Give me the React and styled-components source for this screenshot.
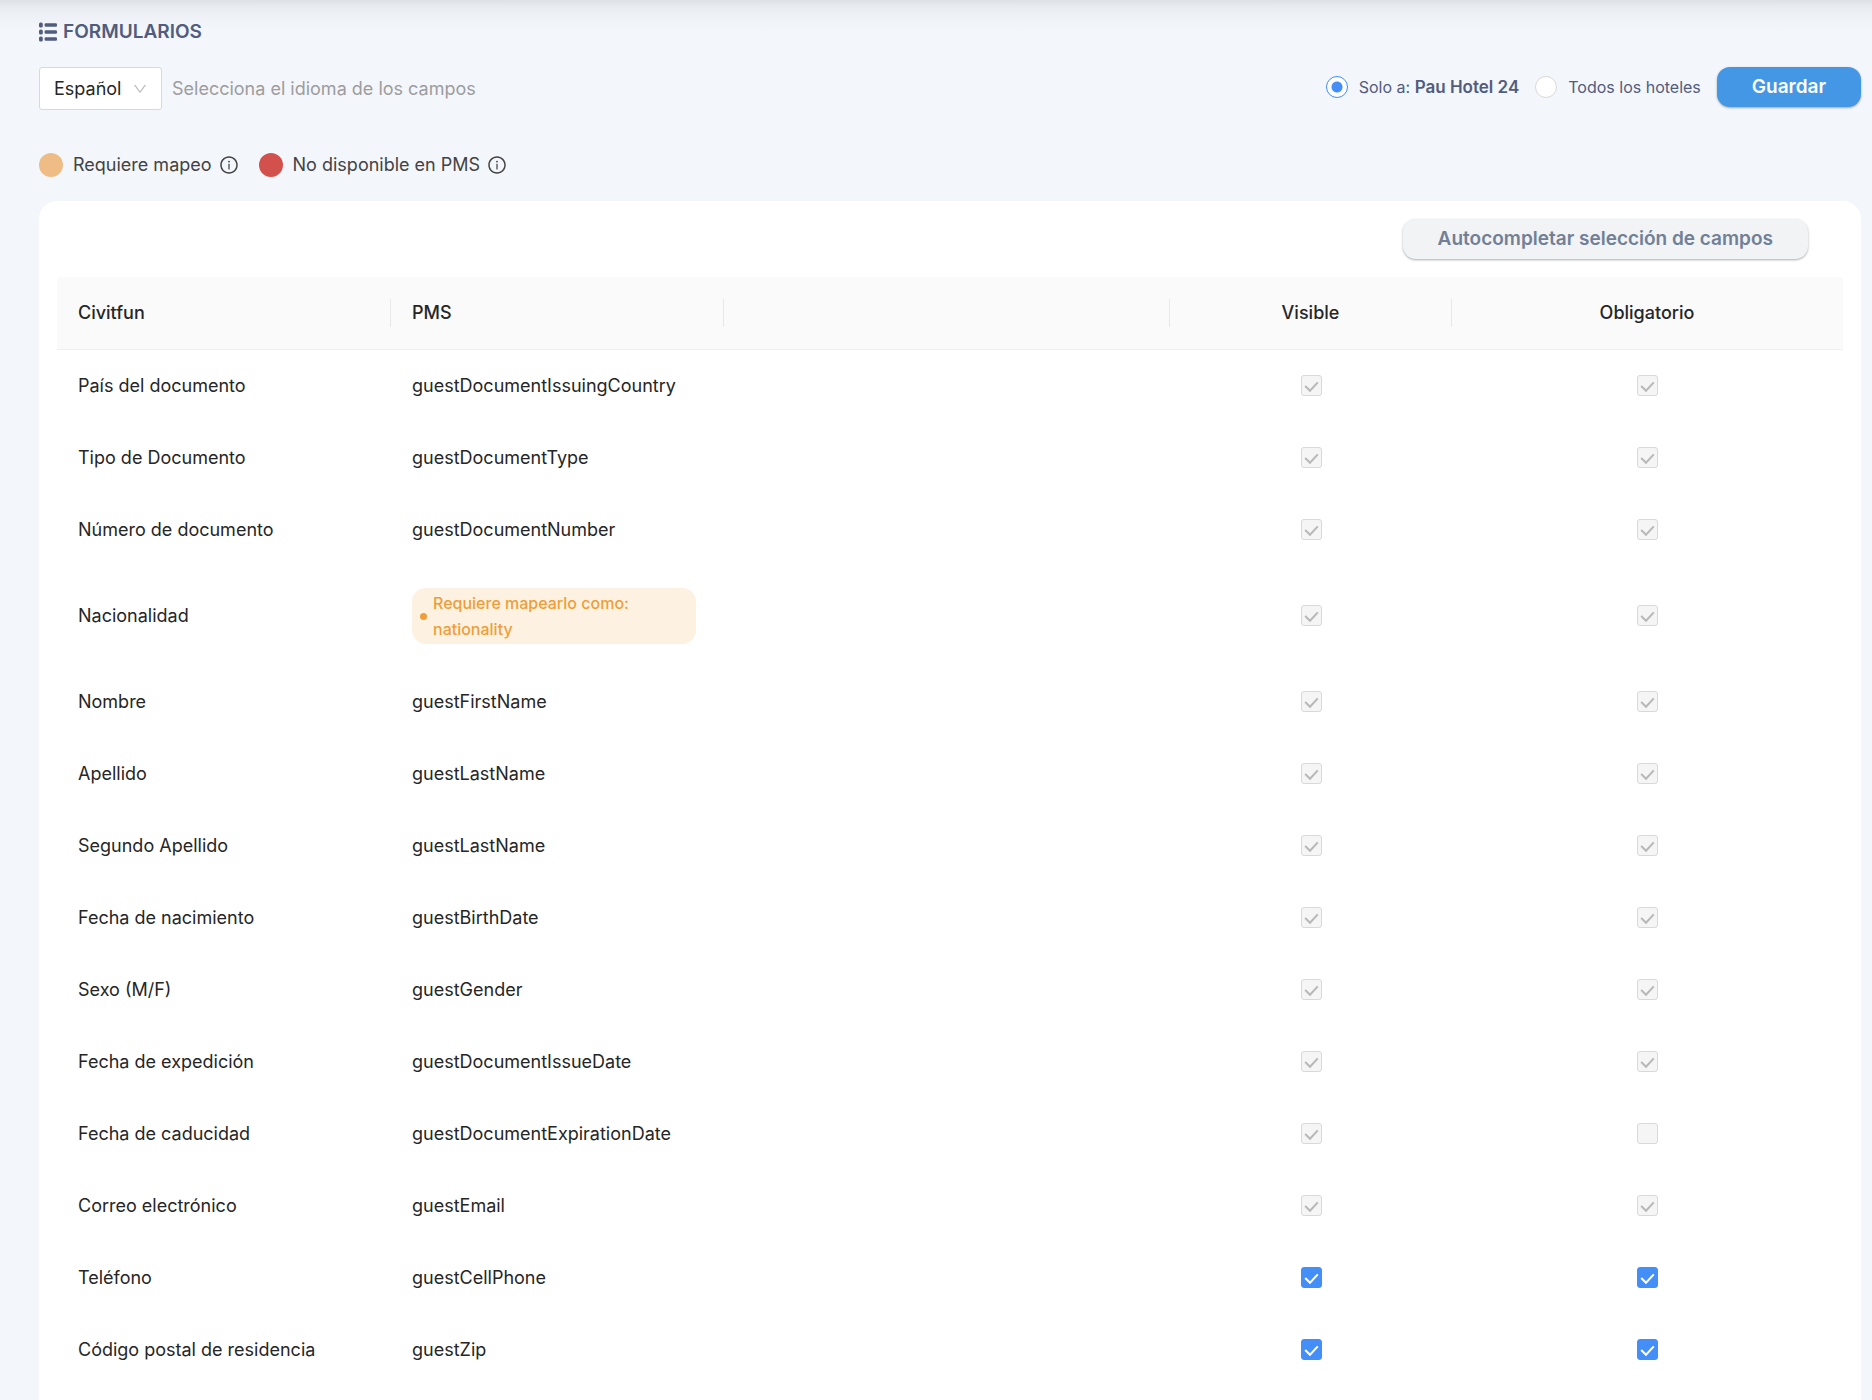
// src/App.jsx
import React, { useState } from 'react';
import styled, { createGlobalStyle } from 'styled-components';
import { AiOutlineDown, AiOutlineInfoCircle } from 'react-icons/ai';

const GlobalStyle = createGlobalStyle`
  * {
    box-sizing: border-box;
  }

  body {
    margin: 0;
    background-color: #f3f6fb;
    color: #262626;
    font-family: Inter, "Liberation Sans", sans-serif;
    font-size: 18px;
    line-height: 28px;
  }

  button, input, select {
    margin: 0;
    font: inherit;
  }
`;

const Page = styled.main`
  padding: 17px 11px 0 39px;
  background: linear-gradient(#dde1e7 0, #e7ebef 6px, #edf1f5 14px, #f3f6fb 30px);
`;

const Title = styled.h1`
  display: flex;
  align-items: center;
  gap: 6px;
  margin: 0 0 20px;
  color: #515c7e;
  font-size: 19px;
  font-weight: 600;
  line-height: 30px;
`;

const Toolbar = styled.div`
  display: flex;
  align-items: flex-start;
  justify-content: space-between;
`;

const LanguageField = styled.label`
  display: flex;
  align-items: center;
  gap: 10px;
  color: #9d9d9d;
`;

const SelectBox = styled.span`
  display: grid;
  align-items: center;

  > * {
    grid-area: 1 / 1;
  }

  svg {
    justify-self: end;
    margin-right: 14px;
    color: #bfbfbf;
    pointer-events: none;
  }
`;

const Select = styled.select`
  width: 123px;
  height: 43px;
  padding: 0 14px;
  border: 1px solid #d9d9d9;
  border-radius: 3px;
  background-color: #fff;
  color: #262626;
  appearance: none;
`;

const Actions = styled.div`
  display: flex;
  align-items: center;
  gap: 16px;
  color: #515c7e;
  font-size: 16px;
`;

const RadioLabel = styled.label`
  display: flex;
  align-items: center;
  gap: 11px;

  strong {
    font-size: 17px;
    font-weight: 600;
  }
`;

const Radio = styled.input`
  width: 22px;
  height: 22px;
  border: 1px solid #d9d9d9;
  border-radius: 50%;
  background-color: #fff;
  appearance: none;

  &:checked {
    border-color: #438ef7;
    background-image: radial-gradient(circle, #438ef7 5px, transparent 6px);
  }
`;

const Button = styled.button`
  height: 40px;
  padding: 0 35px;
  border: 0;
  border-radius: 13px;
  background-color: ${({ $primary }) => ($primary ? '#4497e4' : '#f1f3f5')};
  color: ${({ $primary }) => ($primary ? '#fff' : '#718096')};
  font-size: 19px;
  font-weight: 600;
  box-shadow: 0 1px 3px rgba(0, 0, 0, 0.15), 0 1px 2px rgba(0, 0, 0, 0.2);
`;

const Legend = styled.div`
  display: flex;
  gap: 20px;
  margin: 41px 0 22px;
  color: #434343;
`;

const LegendItem = styled.div`
  display: flex;
  align-items: center;
  gap: 7px;
`;

const LegendDot = styled.span`
  width: 24px;
  height: 24px;
  margin-right: 3px;
  border-radius: 50%;
  background-color: ${({ $color }) => $color};
`;

const Card = styled.section`
  padding: 18px;
  border-radius: 18px 18px 0 0;
  background-color: #fff;
`;

const CardHeader = styled.div`
  display: flex;
  justify-content: flex-end;
  padding: 0 35px 18px 0;
`;

const Table = styled.table`
  width: 100%;
  border-collapse: separate;
  border-spacing: 0;
  table-layout: fixed;
`;

const Col = styled.col`
  width: ${({ $width }) => $width}px;
`;

const Th = styled.th`
  padding: 22px 0;
  border-bottom: 1px solid #f0f0f0;
  background-color: #fafafa;
  font-weight: 500;
  text-align: ${({ $center }) => ($center ? 'center' : 'left')};

  &:first-child {
    border-top-left-radius: 3px;
  }

  &:last-child {
    border-top-right-radius: 3px;
  }
`;

const ThLabel = styled.div`
  height: 28px;
  padding: 0 21px;
  border-right: 1px solid ${({ $last }) => ($last ? 'transparent' : '#e8e8e8')};
`;

const Td = styled.td`
  padding: 22px 21px;
`;

const Tag = styled.div`
  display: flex;
  align-items: center;
  gap: 6px;
  margin-right: 7px;
  padding: 2px 8px;
  border-radius: 14px;
  background-color: #fdf2e1;
  color: #f09d38;
  font-size: 16px;
  font-weight: 500;
  line-height: 26px;
`;

const TagDot = styled.span`
  flex: none;
  width: 7px;
  height: 7px;
  border-radius: 50%;
  background-color: #f09d38;
`;

const CheckBox = styled.span`
  display: grid;
  width: 21px;
  margin: 0 auto 2px;

  > * {
    grid-area: 1 / 1;
  }

  svg {
    color: #b8b8b8;
    pointer-events: none;
    visibility: hidden;
  }

  input:checked + svg {
    visibility: visible;
  }

  input:enabled + svg {
    color: #fff;
  }
`;

const CheckInput = styled.input`
  width: 21px;
  height: 21px;
  border: 1px solid #d9d9d9;
  border-radius: 3px;
  background-color: #fff;
  appearance: none;

  &:disabled {
    background-color: #f5f5f5;
  }

  &:checked:enabled {
    border-color: #438ef7;
    background-color: #438ef7;
  }
`;

const columns = [
  { title: 'Civitfun', width: 334 },
  { title: 'PMS', width: 333 },
  { title: '', width: 446 },
  { title: 'Visible', width: 282, center: true },
  { title: 'Obligatorio', width: 391, center: true },
];

const initialFields = [
  { label: 'País del documento', pms: 'guestDocumentIssuingCountry', locked: true, visible: true, required: true },
  { label: 'Tipo de Documento', pms: 'guestDocumentType', locked: true, visible: true, required: true },
  { label: 'Número de documento', pms: 'guestDocumentNumber', locked: true, visible: true, required: true },
  { label: 'Nacionalidad', mapping: 'nationality', locked: true, visible: true, required: true },
  { label: 'Nombre', pms: 'guestFirstName', locked: true, visible: true, required: true },
  { label: 'Apellido', pms: 'guestLastName', locked: true, visible: true, required: true },
  { label: 'Segundo Apellido', pms: 'guestLastName', locked: true, visible: true, required: true },
  { label: 'Fecha de nacimiento', pms: 'guestBirthDate', locked: true, visible: true, required: true },
  { label: 'Sexo (M/F)', pms: 'guestGender', locked: true, visible: true, required: true },
  { label: 'Fecha de expedición', pms: 'guestDocumentIssueDate', locked: true, visible: true, required: true },
  { label: 'Fecha de caducidad', pms: 'guestDocumentExpirationDate', locked: true, visible: true, required: false },
  { label: 'Correo electrónico', pms: 'guestEmail', locked: true, visible: true, required: true },
  { label: 'Teléfono', pms: 'guestCellPhone', locked: false, visible: true, required: true },
  { label: 'Código postal de residencia', pms: 'guestZip', locked: false, visible: true, required: true },
];

function ListIcon() {
  return (
    <svg width="18" height="20" viewBox="0 0 18 20" fill="currentColor" aria-hidden="true">
      {[0, 7, 14].map((y) => (
        <g key={y}>
          <rect x="0" y={y + 0.5} width="3.8" height="5" rx="1.6" />
          <rect x="5.6" y={y + 1.2} width="12.4" height="3.6" rx="1.2" />
        </g>
      ))}
    </svg>
  );
}

function Check({ label, checked, disabled, onChange }) {
  return (
    <CheckBox>
      <CheckInput type="checkbox" aria-label={label} checked={checked} disabled={disabled} onChange={onChange} />
      <svg width="21" height="21" viewBox="0 0 21 21" fill="none" stroke="currentColor" strokeWidth="2" aria-hidden="true">
        <path d="M4.2 11 9 15.8 16.8 7.4" />
      </svg>
    </CheckBox>
  );
}

function App() {
  const [scope, setScope] = useState('hotel');
  const [fields, setFields] = useState(initialFields);

  const toggle = (index, key) => {
    setFields(fields.map((field, i) => (i === index ? { ...field, [key]: !field[key] } : field)));
  };

  return (
    <>
      <GlobalStyle />
      <Page>
        <Title>
          <ListIcon />
          FORMULARIOS
        </Title>

        <Toolbar>
          <LanguageField>
            <SelectBox>
              <Select>
                <option>Español</option>
              </Select>
              <AiOutlineDown size={16} />
            </SelectBox>
            Selecciona el idioma de los campos
          </LanguageField>

          <Actions>
            <RadioLabel>
              <Radio type="radio" name="scope" checked={scope === 'hotel'} onChange={() => setScope('hotel')} />
              <span>Solo a: <strong>Pau Hotel 24</strong></span>
            </RadioLabel>
            <RadioLabel>
              <Radio type="radio" name="scope" checked={scope === 'all'} onChange={() => setScope('all')} />
              <span>Todos los hoteles</span>
            </RadioLabel>
            <Button type="button" $primary>Guardar</Button>
          </Actions>
        </Toolbar>

        <Legend>
          <LegendItem>
            <LegendDot $color="#f0bc85" />
            Requiere mapeo
            <AiOutlineInfoCircle size={20} />
          </LegendItem>
          <LegendItem>
            <LegendDot $color="#d2514c" />
            No disponible en PMS
            <AiOutlineInfoCircle size={20} />
          </LegendItem>
        </Legend>

        <Card>
          <CardHeader>
            <Button type="button">Autocompletar selección de campos</Button>
          </CardHeader>

          <Table>
            <colgroup>
              {columns.map((column) => (
                <Col key={column.width} $width={column.width} />
              ))}
            </colgroup>
            <thead>
              <tr>
                {columns.map((column, index) => (
                  <Th key={column.width} $center={column.center}>
                    <ThLabel $last={index === columns.length - 1}>{column.title}</ThLabel>
                  </Th>
                ))}
              </tr>
            </thead>
            <tbody>
              {fields.map((field, index) => (
                <tr key={field.label}>
                  <Td>{field.label}</Td>
                  <Td>
                    {field.mapping ? (
                      <Tag>
                        <TagDot />
                        <span>Requiere mapearlo como: {field.mapping}</span>
                      </Tag>
                    ) : (
                      field.pms
                    )}
                  </Td>
                  <Td />
                  <Td>
                    <Check
                      label={`${field.label}: visible`}
                      checked={field.visible}
                      disabled={field.locked}
                      onChange={() => toggle(index, 'visible')}
                    />
                  </Td>
                  <Td>
                    <Check
                      label={`${field.label}: obligatorio`}
                      checked={field.required}
                      disabled={field.locked}
                      onChange={() => toggle(index, 'required')}
                    />
                  </Td>
                </tr>
              ))}
            </tbody>
          </Table>
        </Card>
      </Page>
    </>
  );
}

export default App;
